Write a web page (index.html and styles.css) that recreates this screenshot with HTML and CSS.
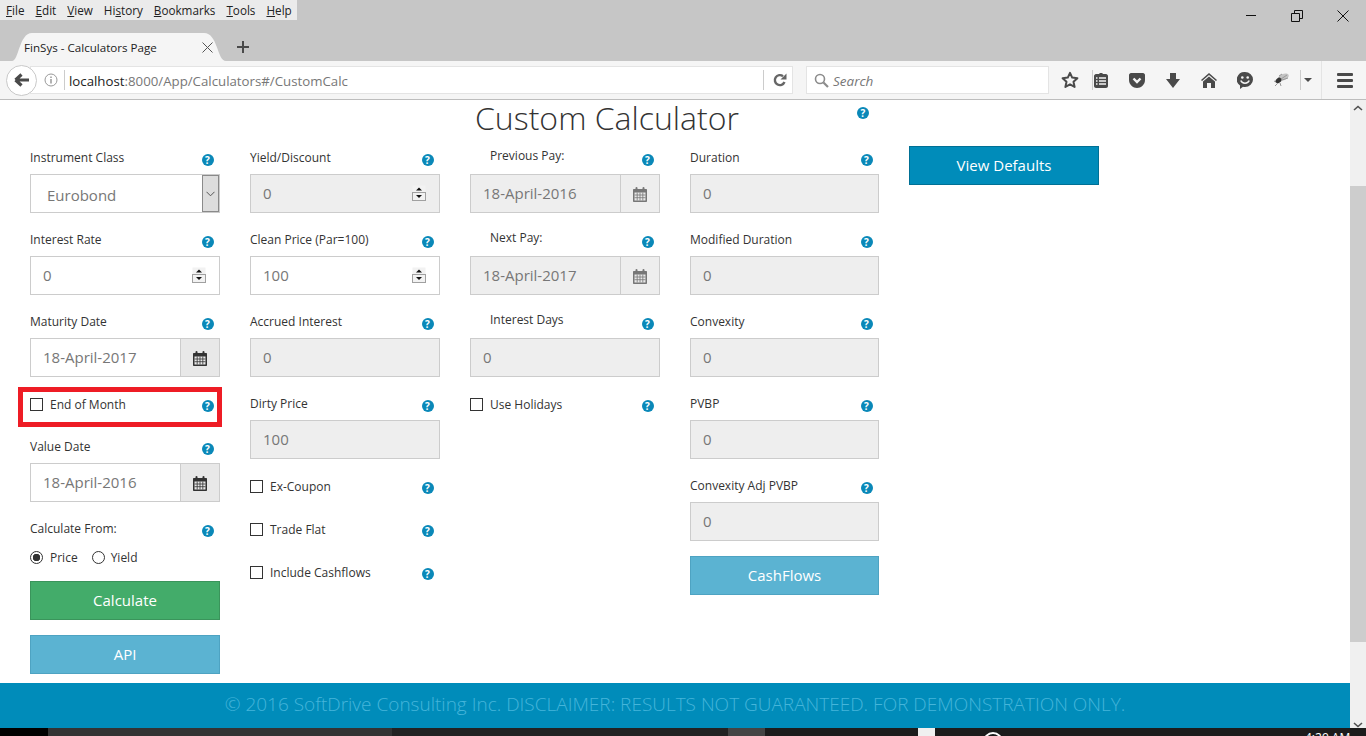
FILE: index.html
```html
<!DOCTYPE html>
<html lang="en">
<head>
    <meta charset="UTF-8">
    <title>FinSys - Calculators Page</title>
    <link rel="stylesheet" href="styles.css">
</head>
<body>
    <!-- browser title area -->
    <div class="topbar">
        <div class="menubar">
            <span><u>F</u>ile</span>
            <span><u>E</u>dit</span>
            <span><u>V</u>iew</span>
            <span>Hi<u>s</u>tory</span>
            <span><u>B</u>ookmarks</span>
            <span><u>T</u>ools</span>
            <span><u>H</u>elp</span>
        </div>
        <div class="winctl">
            <svg width="12" height="12" viewBox="0 0 12 12"><path d="M1 5.5H11" stroke="#111" fill="none"/></svg>
            <svg width="12" height="12" viewBox="0 0 12 12"><path d="M.5 3.5H8.5V11.5H.5ZM3.5 3.5V.5H11.5V8.5H8.5" stroke="#111" fill="none"/></svg>
            <svg width="12" height="12" viewBox="0 0 12 12"><path d="M.5 .5L11.5 11.5M11.5 .5L.5 11.5" stroke="#111" fill="none"/></svg>
        </div>
        <div class="tabstrip">
            <div class="tab">
                <svg class="tabshape" width="214" height="28" viewBox="0 0 214 28"><path d="M0 28C7 28 7 0 20 0H192C206 0 205 28 214 28Z" fill="#f5f5f5"/></svg>
                <span class="tabtitle">FinSys - Calculators Page</span>
                <svg class="tabclose" width="11" height="11" viewBox="0 0 11 11"><path d="M.5 .5L10.5 10.5M10.5 .5L.5 10.5" stroke="#555" fill="none"/></svg>
            </div>
            <svg class="newtab" width="12" height="12" viewBox="0 0 12 12"><path d="M6 0V12M0 6H12" stroke="#4a4a4a" stroke-width="2" fill="none"/></svg>
        </div>
    </div>

    <!-- address bar and toolbar -->
    <div class="navbar">
        <div class="backbtn">
            <svg width="16" height="14" viewBox="0 0 16 14"><path d="M1.5 7L7.5 1.5M1.5 7L7.5 12.5M2 7H15" stroke="#4a4a4a" stroke-width="3.2" fill="none"/></svg>
        </div>
        <div class="urlbar">
            <svg class="infoicon" width="14" height="14" viewBox="0 0 14 14"><circle cx="7" cy="7" r="6" stroke="#999" fill="none"/><path d="M7 6V10.5M7 3.4V5" stroke="#999" stroke-width="1.5"/></svg>
            <span class="urlsep"></span>
            <span class="urltext">localhost<span class="urlgrey">:8000/App/Calculators#/CustomCalc</span></span>
            <span class="urlsep2"></span>
            <svg class="reload" width="14" height="14" viewBox="0 0 14 14"><path d="M11.5 9A5 5 0 1 1 10 3.2" stroke="#666" stroke-width="2.4" fill="none"/><path d="M7.5 6.5L13.5 6.5V.5Z" fill="#666"/></svg>
        </div>
        <div class="searchbar">
            <svg width="15" height="15" viewBox="0 0 15 15"><circle cx="6" cy="6" r="4.5" stroke="#8c8c8c" stroke-width="1.6" fill="none"/><path d="M9.5 9.5L14 14" stroke="#8c8c8c" stroke-width="2.2"/></svg>
            <span>Search</span>
        </div>
        <div class="tool toolstar">
            <svg width="18" height="18" viewBox="0 0 18 18"><path d="M9 1.8L11.2 6.6L16.4 7.2L12.5 10.7L13.6 15.9L9 13.3L4.4 15.9L5.5 10.7L1.6 7.2L6.8 6.6Z" stroke="#4a4a4a" stroke-width="2" stroke-linejoin="round" fill="none"/></svg>
        </div>
        <div class="tool toolclip">
            <svg width="14" height="16" viewBox="0 0 14 16"><path d="M2 2H5C5 .5 9 .5 9 2H12C13 2 14 3 14 4V14C14 15 13 16 12 16H2C1 16 0 15 0 14V4C0 3 1 2 2 2Z" fill="#4a4a4a"/><path d="M2 6H3.5M5 6H12M2 9H3.5M5 9H12M2 12H3.5M5 12H12" stroke="#f5f5f5" stroke-width="1.3"/></svg>
        </div>
        <div class="tool">
            <svg width="16" height="15" viewBox="0 0 16 15"><path d="M2 0H14C15 0 16 1 16 2V7C16 11.5 12 15 8 15C4 15 0 11.5 0 7V2C0 1 1 0 2 0Z" fill="#4a4a4a"/><path d="M4.5 5.5L8 9L11.5 5.5" stroke="#f5f5f5" stroke-width="2.4" fill="none"/></svg>
        </div>
        <div class="tool">
            <svg width="14" height="15" viewBox="0 0 14 15"><path d="M4 0H10V6H14L7 15L0 6H4Z" fill="#4a4a4a"/></svg>
        </div>
        <div class="tool">
            <svg width="16" height="15" viewBox="0 0 16 15"><path d="M8 0L16 7L15 8L8 2L1 8L0 7Z" fill="#4a4a4a"/><path d="M8 3.5L14 8.5V15H10V10H6V15H2V8.5Z" fill="#4a4a4a"/></svg>
        </div>
        <div class="tool">
            <svg width="16" height="17" viewBox="0 0 16 17"><path d="M8 0A8 7.5 0 0 1 8 15C7 15 6.5 15 6 14.8L3 17V13.5A8 7.5 0 0 1 8 0Z" fill="#4a4a4a"/><circle cx="5.3" cy="5.5" r="1.3" fill="#f5f5f5"/><circle cx="10.7" cy="5.5" r="1.3" fill="#f5f5f5"/><path d="M3.8 8.5C5 12 11 12 12.2 8.5" stroke="#f5f5f5" stroke-width="1.5" fill="none"/></svg>
        </div>
        <div class="tool">
            <svg width="17" height="16" viewBox="0 0 17 16"><ellipse cx="10.5" cy="5" rx="5.5" ry="3.2" fill="#c4c4c4" transform="rotate(-20 10.5 5)"/><path d="M6 4L9 2M8 7L14 3M9 8L15 6M3 10L1 9M4 12L2 14M7 11L8 14" stroke="#999" fill="none"/><ellipse cx="5.5" cy="8.5" rx="3.2" ry="2.4" fill="#333" transform="rotate(-40 5.5 8.5)"/></svg>
        </div>
        <span class="toolsep"></span>
        <div class="toolcaret"><span></span></div>
        <span class="toolsep toolsep2"></span>
        <div class="hamburger"><span></span><span></span><span></span></div>
    </div>

    <div class="main">
        <div class="page">
            <div class="content">
                <div class="titlerow">
                    <h1>Custom Calculator</h1>
                    <span class="help">?</span>
                </div>
                <div class="cols">
                    <!-- column 1 -->
                    <div class="col">
                        <div class="field">
                            <div class="lbl"><label>Instrument Class</label><span class="help">?</span></div>
                            <div class="box select">
                                <span class="selval">Eurobond</span>
                                <span class="selbtn"><svg width="9" height="6" viewBox="0 0 9 6"><path d="M.5 .8L4.5 4.8L8.5 .8" stroke="#555" fill="none"/></svg></span>
                            </div>
                        </div>
                        <div class="field">
                            <div class="lbl"><label>Interest Rate</label><span class="help">?</span></div>
                            <div class="box"><input type="text" value="0"><svg class="spin" width="14" height="16" viewBox="0 0 14 16"><use href="#spinner"/></svg></div>
                        </div>
                        <div class="field">
                            <div class="lbl"><label>Maturity Date</label><span class="help">?</span></div>
                            <div class="box date"><input type="text" value="18-April-2017"><span class="addon"><svg width="14" height="15" viewBox="0 0 14 15"><use href="#calendar"/></svg></span></div>
                        </div>
                        <div class="check marked">
                            <label><input type="checkbox">End of Month</label><span class="help">?</span>
                        </div>
                        <div class="field">
                            <div class="lbl"><label>Value Date</label><span class="help">?</span></div>
                            <div class="box date"><input type="text" value="18-April-2016"><span class="addon"><svg width="14" height="15" viewBox="0 0 14 15"><use href="#calendar"/></svg></span></div>
                        </div>
                        <div class="calcfrom">
                            <div class="lbl"><label>Calculate From:</label><span class="help">?</span></div>
                            <div class="radios">
                                <label><input type="radio" name="from" checked>Price</label>
                                <label><input type="radio" name="from">Yield</label>
                            </div>
                        </div>
                        <button class="btn green">Calculate</button>
                        <button class="btn info">API</button>
                    </div>

                    <!-- column 2 -->
                    <div class="col">
                        <div class="field">
                            <div class="lbl"><label>Yield/Discount</label><span class="help">?</span></div>
                            <div class="box off"><input type="text" value="0" disabled><svg class="spin" width="14" height="16" viewBox="0 0 14 16"><use href="#spinner"/></svg></div>
                        </div>
                        <div class="field">
                            <div class="lbl"><label>Clean Price (Par=100)</label><span class="help">?</span></div>
                            <div class="box"><input type="text" value="100"><svg class="spin" width="14" height="16" viewBox="0 0 14 16"><use href="#spinner"/></svg></div>
                        </div>
                        <div class="field">
                            <div class="lbl"><label>Accrued Interest</label><span class="help">?</span></div>
                            <div class="box off"><input type="text" value="0" disabled></div>
                        </div>
                        <div class="field">
                            <div class="lbl"><label>Dirty Price</label><span class="help">?</span></div>
                            <div class="box off"><input type="text" value="100" disabled></div>
                        </div>
                        <div class="check"><label><input type="checkbox">Ex-Coupon</label><span class="help">?</span></div>
                        <div class="check"><label><input type="checkbox">Trade Flat</label><span class="help">?</span></div>
                        <div class="check"><label><input type="checkbox">Include Cashflows</label><span class="help">?</span></div>
                    </div>

                    <!-- column 3 -->
                    <div class="col col3">
                        <div class="field">
                            <div class="lbl"><label>Previous Pay:</label><span class="help">?</span></div>
                            <div class="box off date"><input type="text" value="18-April-2016" disabled><span class="addon"><svg width="14" height="15" viewBox="0 0 14 15"><use href="#calendar"/></svg></span></div>
                        </div>
                        <div class="field">
                            <div class="lbl"><label>Next Pay:</label><span class="help">?</span></div>
                            <div class="box off date"><input type="text" value="18-April-2017" disabled><span class="addon"><svg width="14" height="15" viewBox="0 0 14 15"><use href="#calendar"/></svg></span></div>
                        </div>
                        <div class="field">
                            <div class="lbl"><label>Interest Days</label><span class="help">?</span></div>
                            <div class="box off"><input type="text" value="0" disabled></div>
                        </div>
                        <div class="check"><label><input type="checkbox">Use Holidays</label><span class="help">?</span></div>
                    </div>

                    <!-- column 4 -->
                    <div class="col">
                        <div class="field">
                            <div class="lbl"><label>Duration</label><span class="help">?</span></div>
                            <div class="box off"><input type="text" value="0" disabled></div>
                        </div>
                        <div class="field">
                            <div class="lbl"><label>Modified Duration</label><span class="help">?</span></div>
                            <div class="box off"><input type="text" value="0" disabled></div>
                        </div>
                        <div class="field">
                            <div class="lbl"><label>Convexity</label><span class="help">?</span></div>
                            <div class="box off"><input type="text" value="0" disabled></div>
                        </div>
                        <div class="field">
                            <div class="lbl"><label>PVBP</label><span class="help">?</span></div>
                            <div class="box off"><input type="text" value="0" disabled></div>
                        </div>
                        <div class="field">
                            <div class="lbl"><label>Convexity Adj PVBP</label><span class="help">?</span></div>
                            <div class="box off"><input type="text" value="0" disabled></div>
                        </div>
                        <button class="btn info">CashFlows</button>
                    </div>

                    <div class="col">
                        <button class="btn blue">View Defaults</button>
                    </div>
                </div>
            </div>
            <div class="footer">© 2016 SoftDrive Consulting Inc. DISCLAIMER: RESULTS NOT GUARANTEED. FOR DEMONSTRATION ONLY.</div>
        </div>
        <div class="scrollbar">
            <svg width="10" height="6" viewBox="0 0 10 6"><path d="M1 5L5 1.5L9 5" stroke="#505050" stroke-width="1.6" fill="none"/></svg>
            <div class="thumb"></div>
            <svg width="10" height="6" viewBox="0 0 10 6"><path d="M1 1L5 4.5L9 1" stroke="#505050" stroke-width="1.6" fill="none"/></svg>
        </div>
    </div>

    <!-- bit of the windows taskbar at the bottom -->
    <div class="taskbar">
        <span class="tb1"></span>
        <span class="tb2"></span>
        <span class="tb3"></span>
        <span class="tb4"></span>
        <span class="tb5"></span>
        <span class="tb6"></span>
        <span class="tb7"></span>
        <span class="clock">4:29 AM</span>
    </div>

    <svg class="defs" width="0" height="0">
        <defs>
            <g id="spinner">
                <rect x=".5" y=".5" width="13" height="7" fill="#f2f2f2"/>
                <rect x=".5" y="7.5" width="13" height="8" fill="#f2f2f2" stroke="#a0a0a0"/>
                <path d="M4 5.5L7 2.5L10 5.5Z" fill="#111"/>
                <path d="M4 10L7 13L10 10Z" fill="#111"/>
            </g>
            <g id="calendar">
                <path d="M1 2H13C13.6 2 14 2.4 14 3V14C14 14.6 13.6 15 13 15H1C.4 15 0 14.6 0 14V3C0 2.4 .4 2 1 2Z" fill="currentColor"/>
                <rect x="2.5" y="0" width="2" height="4" rx="1" fill="currentColor"/>
                <rect x="9.5" y="0" width="2" height="4" rx="1" fill="currentColor"/>
                <path d="M1.5 5.5H12.5V13.5H1.5Z" fill="#e8e8e8"/>
                <path d="M1.5 8H12.5M1.5 10.7H12.5M4.2 5.5V13.5M7 5.5V13.5M9.8 5.5V13.5" stroke="currentColor" stroke-width=".8"/>
            </g>
        </defs>
    </svg>
</body>
</html>
```
FILE: styles.css
```css
* {
    box-sizing: border-box;
}
html, body {
    height: 100%;
}
body {
    margin: 0;
    display: flex;
    flex-direction: column;
    height: 736px;
    overflow: hidden;
    background-color: #fff;
    font-family: "Open Sans", "Liberation Sans", sans-serif;
    color: #333;
}
.defs {
    position: absolute;
}

/* title bar */
.topbar {
    position: relative;
    height: 61px;
    background-color: #c6c6c6;
}
.menubar {
    display: flex;
    gap: 11px;
    width: 297px;
    height: 20px;
    padding-left: 6px;
    background-color: #ebebeb;
    color: #222;
    font-size: 11.7px;
    line-height: 20px;
}
.winctl {
    position: absolute;
    top: 10px;
    right: 17px;
    display: flex;
    gap: 34px;
}
.tabstrip {
    display: flex;
    align-items: center;
    height: 28px;
    margin-top: 13px;
    padding-left: 12px;
}
.tab {
    position: relative;
    display: flex;
    align-items: center;
    width: 214px;
    height: 28px;
    padding-left: 12px;
    font-size: 11.6px;
    color: #222;
}
.tabshape {
    position: absolute;
    left: 0;
    top: 0;
}
.tabtitle {
    position: relative;
    flex: 1;
}
.tabclose {
    position: relative;
    margin-right: 13px;
}
.newtab {
    margin-left: 11px;
}

/* nav bar */
.navbar {
    display: flex;
    align-items: center;
    height: 39px;
    padding-left: 6px;
    background-color: #f5f5f5;
    border-bottom: 1px solid #bdbdbd;
}
.backbtn {
    position: relative;
    z-index: 1;
    display: flex;
    align-items: center;
    justify-content: center;
    width: 31px;
    height: 31px;
    margin-right: -7px;
    background-color: #fff;
    border: 1px solid #c9c9c9;
    border-radius: 50%;
}
.urlbar {
    display: flex;
    align-items: center;
    width: 763px;
    height: 28px;
    padding-left: 13px;
    background-color: #fff;
    border: 1px solid #e4e4e4;
}
.infoicon {
    flex: none;
}
.urlsep {
    width: 1px;
    height: 20px;
    margin: 0 4px 0 6px;
    background-color: #ccc;
}
.urltext {
    flex: 1;
    padding-top: 2px;
    font-size: 13.25px;
    color: #222;
}
.urlgrey {
    color: #777;
}
.urlsep2 {
    width: 1px;
    height: 20px;
    background-color: #ccc;
}
.reload {
    margin: 0 5px 0 9px;
}
.searchbar {
    display: flex;
    align-items: center;
    gap: 4px;
    width: 243px;
    height: 28px;
    margin: 0 3px 0 13px;
    padding-left: 7px;
    background-color: #fff;
    border: 1px solid #e4e4e4;
    color: #777;
    font-size: 13.5px;
    font-style: italic;
}
.searchbar span {
    padding-top: 2px;
}
.tool {
    position: relative;
    display: flex;
    align-items: center;
    justify-content: center;
    width: 36px;
    height: 24px;
}
.toolstar {
    width: 31px;
    padding-left: 5px;
}
.toolclip::before {
    content: '';
    position: absolute;
    left: 9px;
    top: 2px;
    width: 1px;
    height: 20px;
    background-color: #ccc;
}
.toolsep {
    width: 1px;
    height: 20px;
    margin-left: 1px;
    background-color: #ccc;
}
.toolsep2 {
    height: 38px;
    margin-left: 7px;
    background-color: #e4e4e4;
}
.toolcaret {
    display: flex;
    justify-content: center;
    width: 13px;
}
.toolcaret span {
    border-top: 4px solid #4a4a4a;
    border-left: 4px solid transparent;
    border-right: 4px solid transparent;
}
.hamburger {
    display: flex;
    flex-direction: column;
    gap: 3px;
    width: 16px;
    margin-left: 15px;
}
.hamburger span {
    height: 3px;
    background-color: #4a4a4a;
    border-radius: 1px;
}

/* page */
.main {
    display: flex;
    height: 628px;
}
.page {
    display: flex;
    flex-direction: column;
    flex: 1;
}
.content {
    flex: 1;
    padding-left: 30px;
}
.titlerow {
    display: flex;
    height: 46px;
    padding-left: 445px;
}
h1 {
    margin: 0;
    width: 263px;
    font-size: 32px;
    font-weight: 300;
    line-height: 36px;
    white-space: nowrap;
}
.titlerow .help {
    margin: 7px 0 0 119px;
}
.cols {
    display: flex;
    gap: 30px;
}
.col {
    display: flex;
    flex-direction: column;
    width: 190px;
}
.col:nth-child(4) {
    width: 189px;
}
.field {
    padding-top: 4px;
    margin-bottom: 15px;
}
.lbl {
    display: flex;
    justify-content: space-between;
    align-items: flex-start;
    height: 24px;
    padding-right: 6.5px;
}
.lbl label {
    font-size: 12px;
    line-height: 16px;
}
.col3 .lbl label {
    margin: -2px 0 0 20px;
}
.help {
    flex: none;
    width: 12px;
    height: 12px;
    margin-top: 4px;
    background-color: #0a88b8;
    border-radius: 50%;
    color: #fff;
    font-size: 10px;
    font-weight: 700;
    line-height: 12px;
    text-align: center;
}
.box {
    display: flex;
    align-items: center;
    height: 39px;
    background-color: #fff;
    border: 1px solid #ccc;
}
.box input[type=text] {
    flex: 1;
    min-width: 0;
    height: 100%;
    padding: 0 0 2px 12px;
    background: transparent;
    border: 0;
    outline: 0;
    font-family: inherit;
    font-size: 15px;
    color: #777;
}
.off {
    background-color: #eee;
}
.spin {
    flex: none;
    margin: 0 13px 1px 0;
}
.addon {
    display: flex;
    align-items: center;
    justify-content: center;
    width: 39px;
    height: 100%;
    background-color: #e8e8e8;
    border-left: 1px solid #ccc;
    color: #333;
}
.addon svg {
    margin-top: 2px;
}
.off .addon {
    background-color: #eee;
    color: #777;
}
.selval {
    flex: 1;
    padding: 3px 0 0 16px;
    font-size: 15px;
    color: #777;
}
.selbtn {
    display: flex;
    align-items: center;
    justify-content: center;
    width: 17px;
    height: 37px;
    background-color: #ddd;
    border: 1px solid #8a8a8a;
}
.check {
    display: flex;
    justify-content: space-between;
    align-items: flex-start;
    height: 43px;
    padding: 4px 6.5px 0 0;
}
.check label {
    display: flex;
    align-items: center;
    height: 16px;
    font-size: 12px;
}
.check .help {
    margin-top: 4px;
}
.check input {
    appearance: none;
    width: 13px;
    height: 13px;
    margin: 0 7px 0 0;
    background-color: #fff;
    border: 1px solid #333;
}
.marked {
    position: relative;
}
.marked::after {
    content: '';
    position: absolute;
    left: -12px;
    right: -2px;
    top: -5px;
    height: 30px;
    border: 5px solid #ee1c25;
}
.calcfrom {
    padding-top: 4px;
}
.radios {
    display: flex;
    gap: 14px;
    height: 36px;
    padding-top: 4px;
}
.radios label {
    display: flex;
    align-items: center;
    height: 16px;
    font-size: 12px;
}
.radios input {
    appearance: none;
    width: 13px;
    height: 13px;
    margin: 0 7px 0 0;
    background-color: #fff;
    border: 1px solid #333;
    border-radius: 50%;
}
.radios label + label input {
    margin-right: 6px;
}
.radios input:checked {
    background: radial-gradient(circle, #333 0 3.5px, #fff 4px);
}
.btn {
    display: block;
    flex: none;
    width: 100%;
    height: 39px;
    margin: 0;
    padding: 0 0 2px;
    border: 1px solid;
    font-family: inherit;
    font-size: 15px;
    color: #fff;
}
.btn + .btn {
    margin-top: 15px;
}
.green {
    background-color: #43ac6a;
    border-color: #3a945b;
}
.info {
    background-color: #5bb3d2;
    border-color: #4ea3c2;
}
.blue {
    background-color: #008cba;
    border-color: #007095;
}
.footer {
    height: 45px;
    background-color: #008cba;
    color: #45b5da;
    font-size: 19px;
    font-weight: 300;
    line-height: 43px;
    text-align: center;
}

/* scrollbar */
.scrollbar {
    display: flex;
    flex-direction: column;
    align-items: center;
    width: 16px;
    background-color: #f0f0f0;
}
.scrollbar svg {
    flex: none;
    margin: 5px 0;
}
.thumb {
    flex: none;
    width: 100%;
    height: 456px;
    margin: 70px 0 75px;
    background-color: #cdcdcd;
}

/* taskbar */
.taskbar {
    position: relative;
    display: flex;
    height: 8px;
    overflow: hidden;
    background-color: #1c1c1c;
}
.taskbar span {
    height: 100%;
}
.tb1 {
    width: 48px;
    background-color: #000;
}
.tb2 {
    width: 344px;
    background-color: #333;
}
.tb3 {
    width: 336px;
    background-color: #222;
}
.tb4 {
    width: 37px;
    background-color: #444;
}
.tb5 {
    width: 153px;
}
.tb6 {
    width: 17px;
    background-color: #f0f0f0;
}
.taskbar .tb7 {
    width: 20px;
    height: 20px;
    margin: 4px 0 0 48px;
    border: 2px solid #fff;
    border-radius: 50%;
}
.taskbar .clock {
    position: absolute;
    left: 1305px;
    top: 2px;
    height: auto;
    color: #fff;
    font-size: 12px;
    line-height: 16px;
}
```
